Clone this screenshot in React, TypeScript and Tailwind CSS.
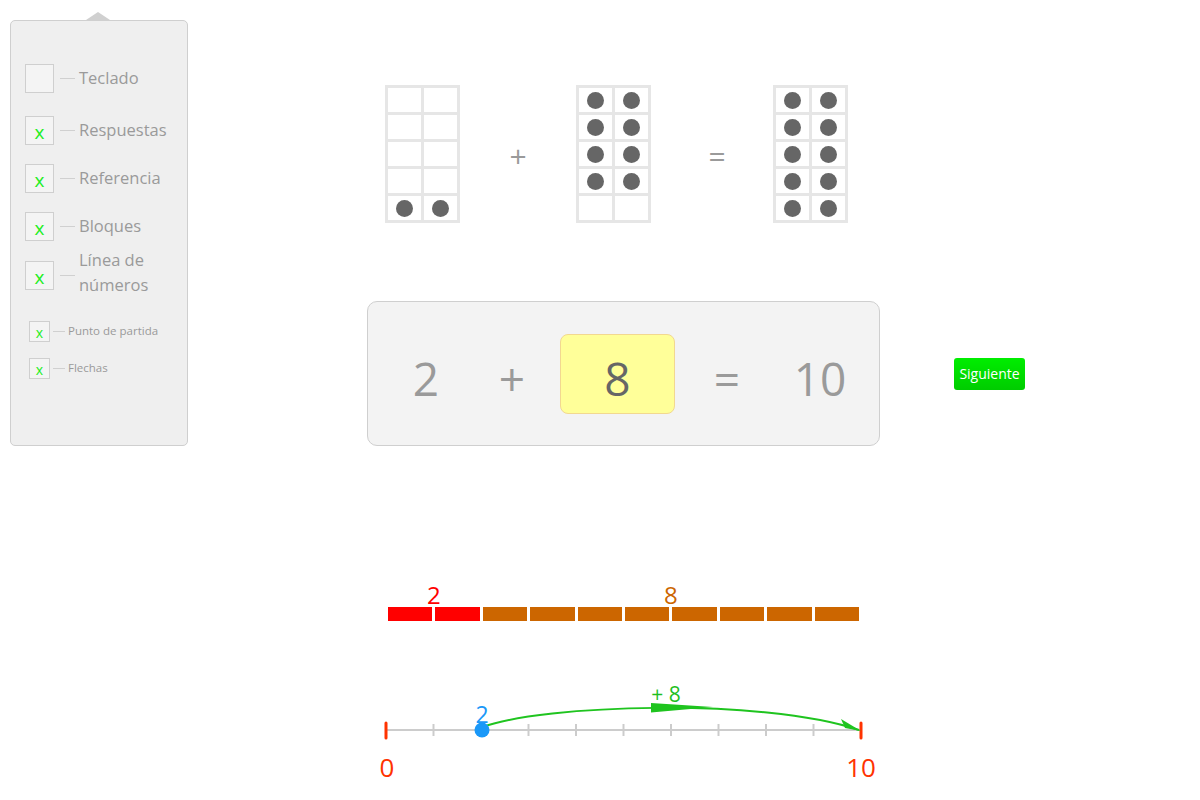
import React from "react";

const FONT = "font-['Open_Sans','Noto_Sans',sans-serif]";

type Opt = { label: string; checked: boolean; small?: boolean; two?: boolean; mt: string };

const OPTIONS: Opt[] = [
    { label: "Teclado", checked: false, mt: "mt-[43px]" },
    { label: "Respuestas", checked: true, mt: "mt-[24px]" },
    { label: "Referencia", checked: true, mt: "mt-[20px]" },
    { label: "Bloques", checked: true, mt: "mt-[20px]" },
    { label: "Línea de números", checked: true, two: true, mt: "mt-[10px]" },
    { label: "Punto de partida", checked: true, small: true, mt: "mt-[21px]" },
    { label: "Flechas", checked: true, small: true, mt: "mt-[17px]" },
];

function OptionRow({ opt }: { opt: Opt }) {
    if (opt.small) {
        return (
            <div className={`flex items-center h-[20px] ml-[18px] ${opt.mt}`}>
                <div className="w-[21px] h-[21px] border border-[#cfcfcf] bg-[#f4f4f4] flex justify-center items-center pt-[3px] text-[14px] text-[#22ee22] leading-none">
                    x
                </div>
                <div className="w-[12px] h-px bg-[#d0d0d0] ml-[3px]" />
                <span className="ml-[3px] text-[11.5px] text-[#9a9a9a]">{opt.label}</span>
            </div>
        );
    }
    return (
        <div className={`flex items-center ml-[14px] ${opt.mt} ${opt.two ? "h-[50px]" : "h-[28px]"}`}>
            <div className="w-[29px] h-[29px] border border-[#cfcfcf] bg-[#f4f4f4] flex justify-center items-center pt-[5px] text-[19px] text-[#22ee22] leading-none shrink-0">
                {opt.checked ? "x" : ""}
            </div>
            <div className="w-[15px] h-px bg-[#d0d0d0] ml-[6px] shrink-0" />
            <span
                className={`ml-[4px] text-[16.5px] text-[#9a9a9a] ${
                    opt.two ? "leading-[25px] w-[80px] -mt-[6px]" : ""
                }`}
            >
                {opt.label}
            </span>
        </div>
    );
}

function TenFrame({ filled }: { filled: number[] }) {
    return (
        <div className="grid grid-cols-2 gap-[3px] p-[3px] bg-[#e6e6e6] w-fit">
            {Array.from({ length: 10 }).map((_, i) => (
                <div key={i} className="w-[33px] h-[24px] bg-white flex items-center justify-center">
                    {filled.includes(i) && <div className="w-[17px] h-[17px] rounded-full bg-[#666666]" />}
                </div>
            ))}
        </div>
    );
}

function NumberLine() {
    const ticks = Array.from({ length: 11 }).map((_, i) => 15 + 47.5 * i);
    return (
        <svg width="520" height="110" className="block">
            <line x1="15" y1="49" x2="490" y2="49" stroke="#cccccc" strokeWidth="2" />
            {ticks.map((x, i) =>
                i === 0 || i === 10 ? (
                    <line key={i} x1={x} y1="42" x2={x} y2="57" stroke="#ff3300" strokeWidth="3" strokeLinecap="round" />
                ) : (
                    <line key={i} x1={x} y1="43" x2={x} y2="55" stroke="#cccccc" strokeWidth="2" />
                )
            )}
            <path d="M 112 46 C 170 24, 390 16, 488 49" fill="none" stroke="#1fc41f" strokeWidth="2" />
            <polygon points="280,22 280,31.5 342,26" fill="#1fc41f" />
            <polygon points="470,38 490,50 474,47" fill="#1fc41f" />
            <circle cx="111" cy="49" r="7.5" fill="#1a98f8" />
            <text x="111" y="42" textAnchor="middle" fontSize="23" fill="#1a98f8" fontFamily="Open Sans, sans-serif">2</text>
            <text x="295" y="21" textAnchor="middle" fontSize="21" fill="#1fbf1f" fontFamily="Open Sans, sans-serif">+ 8</text>
            <text x="16" y="96" textAnchor="middle" fontSize="26" fill="#ff3300" fontFamily="Open Sans, sans-serif">0</text>
            <text x="490" y="96" textAnchor="middle" fontSize="26" fill="#ff3300" fontFamily="Open Sans, sans-serif">10</text>
        </svg>
    );
}

export default function App() {
    return (
        <div className={`w-[1200px] h-[800px] bg-white flex overflow-hidden ${FONT}`}>
            {/* options panel */}
            <div className="relative ml-[10px] mt-[20px] w-[178px] h-[426px] bg-[#efefef] border border-[#cfcfcf] rounded-[5px] shrink-0">
                <div className="absolute left-[75px] -top-[9px] w-0 h-0 border-l-[12px] border-r-[12px] border-b-[8px] border-l-transparent border-r-transparent border-b-[#d0d0d0]" />
                {OPTIONS.map((o) => (
                    <OptionRow key={o.label} opt={o} />
                ))}
            </div>

            {/* main area */}
            <div className="flex flex-col">
                <div className="flex items-center ml-[197px] mt-[85px]">
                    <TenFrame filled={[8, 9]} />
                    <div className="w-[116px] pt-[3px] text-center text-[30px] text-[#9a9a9a]">+</div>
                    <TenFrame filled={[0, 1, 2, 3, 4, 5, 6, 7]} />
                    <div className="w-[122px] pl-[10px] pt-[3px] text-center text-[30px] text-[#9a9a9a]">=</div>
                    <TenFrame filled={[0, 1, 2, 3, 4, 5, 6, 7, 8, 9]} />
                </div>

                <div className="flex items-center ml-[179px] mt-[78px]">
                    <div className="w-[513px] h-[145px] bg-[#f3f3f3] border border-[#cfcfcf] rounded-[10px] flex items-center text-[46px] text-[#9a9a9a]">
                        <span className="w-[40px] text-center ml-[38px] pt-[10px]">2</span>
                        <span className="w-[40px] text-center ml-[46px] pt-[10px]">+</span>
                        <div className="ml-[28px] w-[115px] h-[80px] pt-[10px] bg-[#ffff99] border border-[#f2d890] rounded-[8px] flex items-center justify-center text-[#666666]">
                            8
                        </div>
                        <span className="w-[40px] text-center ml-[32px] pt-[10px]">=</span>
                        <span className="w-[70px] text-center ml-[38px] pt-[10px]">10</span>
                    </div>
                    <button className="ml-[74px] w-[71px] h-[32px] rounded-[3px] bg-gradient-to-b from-[#00ee00] to-[#00cc00] text-white text-[14px]">
                        Siguiente
                    </button>
                </div>

                <div className="ml-[200px] mt-[137px] w-[471px]">
                    <div className="grid grid-cols-10 gap-[3px] text-[24px] leading-none h-[24px]">
                        <span className="col-span-2 text-center text-[#ff0000]">2</span>
                        <span className="col-span-8 text-center text-[#cc6600]">8</span>
                    </div>
                    <div className="grid grid-cols-10 gap-[3px] h-[14px]">
                        {Array.from({ length: 10 }).map((_, i) => (
                            <div key={i} className={i < 2 ? "bg-[#ff0000]" : "bg-[#cc6600]"} />
                        ))}
                    </div>
                </div>

                <div className="ml-[183px] mt-[60px]">
                    <NumberLine />
                </div>
            </div>
        </div>
    );
}
